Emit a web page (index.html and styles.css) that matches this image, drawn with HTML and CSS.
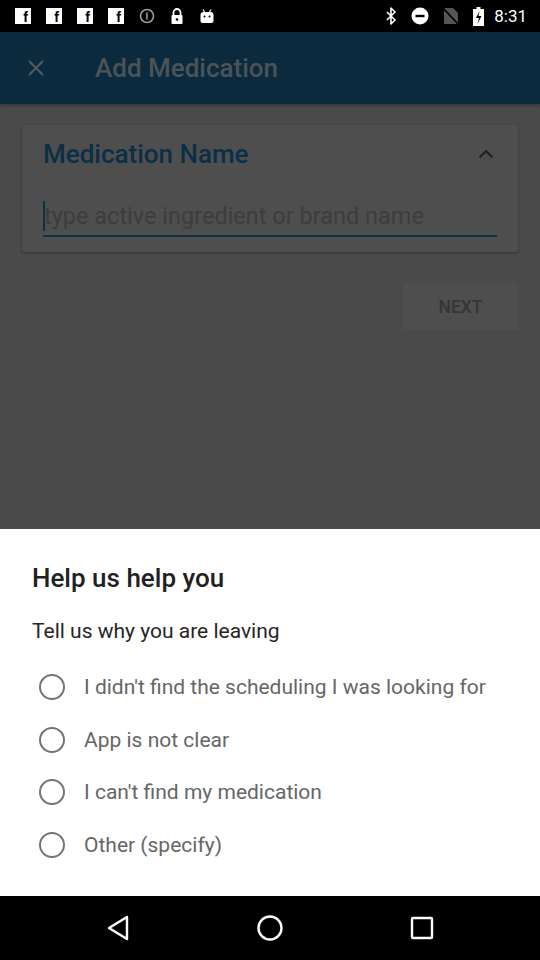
FILE: index.html
```html
<!DOCTYPE html>
<html>
<head>
<meta charset="utf-8">
<link rel="stylesheet" href="styles.css">
</head>
<body>
<div class="phone">
  <div class="status">
    <div class="status-left">
      <span class="fb">f</span><span class="fb">f</span><span class="fb">f</span><span class="fb">f</span>
      <svg class="si" width="16" height="16" viewBox="0 0 16 16"><circle cx="8" cy="8" r="6.5" fill="none" stroke="#9a9a9a" stroke-width="1.6"/><rect x="7.2" y="4.5" width="1.6" height="7" fill="#9a9a9a"/></svg>
      <svg class="si" width="14" height="18" viewBox="0 0 14 18"><path d="M3.5 8V5.5a3.5 3.5 0 0 1 7 0V8" fill="none" stroke="#fff" stroke-width="1.8"/><rect x="1.5" y="8" width="11" height="9" rx="1" fill="#fff"/><circle cx="7" cy="12.5" r="1.3" fill="#000"/></svg>
      <svg class="si" width="16" height="16" viewBox="0 0 16 16"><path d="M4 1.5l1.5 2.5M12 1.5l-1.5 2.5" stroke="#fff" stroke-width="1.2"/><path d="M1.5 7a3 3 0 0 1 3-3h7a3 3 0 0 1 3 3v6a2 2 0 0 1-2 2h-9a2 2 0 0 1-2-2z" fill="#fff"/><circle cx="5.5" cy="8.5" r="1" fill="#000"/><circle cx="10.5" cy="8.5" r="1" fill="#000"/></svg>
    </div>
    <div class="status-right">
      <svg class="si" width="12" height="18" viewBox="0 0 12 18"><path d="M2 5l8 8-4 4V1l4 4-8 8" fill="none" stroke="#fff" stroke-width="1.6" stroke-linejoin="round"/></svg>
      <svg class="si" width="18" height="18" viewBox="0 0 18 18"><circle cx="9" cy="9" r="8.5" fill="#fff"/><rect x="4.5" y="7.8" width="9" height="2.4" fill="#000"/></svg>
      <svg class="si" width="16" height="18" viewBox="0 0 16 18"><path d="M1 1h9l5 5v11H1z" fill="#555"/><path d="M0 1l16 17" stroke="#000" stroke-width="1.6"/></svg>
      <svg class="si" width="11" height="19" viewBox="0 0 11 19"><rect x="3.5" y="0" width="4" height="2" fill="#fff"/><rect x="0" y="2" width="11" height="17" fill="#fff"/><path d="M6.5 4L3 11h3l-1.5 6L8.5 9h-3z" fill="#000"/></svg>
      <span class="time">8:31</span>
    </div>
  </div>

  <div class="dimmed">
    <div class="appbar">
      <svg class="close" width="18" height="18" viewBox="0 0 18 18"><path d="M2 2l14 14M16 2L2 16" stroke="#4f5a61" stroke-width="2"/></svg>
      <span class="appbar-title">Add Medication</span>
    </div>
    <div class="content">
      <div class="card">
        <div class="card-head">
          <span class="card-title">Medication Name</span>
          <svg width="16" height="10" viewBox="0 0 16 10"><path d="M1.5 8.5L8 2l6.5 6.5" fill="none" stroke="#222" stroke-width="2.2"/></svg>
        </div>
        <div class="field">
          <span class="cursor"></span><span class="placeholder">type active ingredient or brand name</span>
        </div>
      </div>
      <div class="actions">
        <div class="next">NEXT</div>
      </div>
    </div>
  </div>

  <div class="sheet">
    <div class="sheet-title">Help us help you</div>
    <div class="sheet-sub">Tell us why you are leaving</div>
    <div class="options">
      <div class="option"><span class="radio"></span><span>I didn't find the scheduling I was looking for</span></div>
      <div class="option"><span class="radio"></span><span>App is not clear</span></div>
      <div class="option"><span class="radio"></span><span>I can't find my medication</span></div>
      <div class="option"><span class="radio"></span><span>Other (specify)</span></div>
    </div>
  </div>

  <div class="navbar">
    <div class="navcell"><svg width="26" height="28" viewBox="0 0 26 28"><path d="M22 3L4 14l18 11z" fill="none" stroke="#fff" stroke-width="2.4" stroke-linejoin="round"/></svg></div>
    <div class="navcell"><svg width="28" height="28" viewBox="0 0 28 28"><circle cx="14" cy="14" r="11.5" fill="none" stroke="#fff" stroke-width="2.4"/></svg></div>
    <div class="navcell"><svg width="24" height="24" viewBox="0 0 24 24"><rect x="2" y="2" width="20" height="20" rx="1" fill="none" stroke="#fff" stroke-width="2.4"/></svg></div>
  </div>
</div>
</body>
</html>
```
FILE: styles.css
```css
* { box-sizing: border-box; }
html, body { margin: 0; padding: 0; }
body { font-family: Roboto, "Noto Sans", sans-serif; background: #000; }
.phone { width: 540px; height: 960px; display: flex; flex-direction: column; overflow: hidden; }

.status { height: 32px; background: #000; display: flex; align-items: center; justify-content: space-between; padding: 0 13px 0 15px; }
.status-left, .status-right { display: flex; align-items: center; }
.status-left { gap: 15px; }
.status-right { gap: 14px; }
.fb { width: 16px; height: 16px; background: #fff; color: #000; font-family: "Liberation Sans", sans-serif; font-weight: 700; font-size: 14px; line-height: 18px; text-align: right; padding-right: 3px; }
.si { display: block; }
.time { color: #fff; font-size: 17px; margin-left: -4px; }

.dimmed { height: 497px; display: flex; flex-direction: column; background: #4a4a4a; }
.appbar { height: 72px; background: #0b2a3d; display: flex; align-items: center; padding-left: 27px; box-shadow: 0 2px 3px rgba(0,0,0,0.25); position: relative; z-index: 1; }
.close { display: block; }
.appbar-title { margin-left: 50px; color: #4b5358; font-size: 26px; font-weight: 500; }

.content { flex: 1; padding: 21px 22px 0 22px; }
.card { background: #4e4e4e; height: 127px; border-radius: 2px; box-shadow: 0 1px 3px rgba(0,0,0,0.3); padding: 14px 21px 0 21px; }
.card-head { height: 30px; display: flex; align-items: center; justify-content: space-between; padding-right: 3px; }
.card-head svg { display: block; }
.card-title { color: #0a2f47; font-size: 26px; font-weight: 500; line-height: 30px; }
.field { margin-top: 27px; height: 41px; border-bottom: 2px solid #0b3345; display: flex; align-items: center; }
.cursor { width: 2px; height: 30px; background: #0b3345; flex: none; }
.placeholder { color: #3d3d3d; font-size: 23.5px; margin-left: -1px; }

.actions { display: flex; justify-content: flex-end; margin-top: 32px; }
.next { width: 115px; height: 46px; background: #4e4e4e; color: #353535; font-size: 17.5px; font-weight: 500; display: flex; align-items: center; justify-content: center; }

.sheet { height: 367px; background: #fff; padding: 34px 0 0 32px; }
.sheet-title { font-size: 26px; font-weight: 500; color: #212121; line-height: 30px; }
.sheet-sub { font-size: 21px; color: #262626; line-height: 24px; margin-top: 26px; }
.options { margin-top: 18px; display: flex; flex-direction: column; }
.option { height: 52.5px; display: flex; align-items: center; color: #666; font-size: 21px; padding-left: 7px; }
.radio { width: 26px; height: 26px; border: 2.5px solid #757575; border-radius: 50%; margin-right: 19px; flex: none; }

.navbar { height: 64px; background: #000; display: flex; align-items: center; padding: 0 42px; }
.navcell { flex: 1; display: flex; justify-content: center; }
.navbar svg { display: block; }
```
